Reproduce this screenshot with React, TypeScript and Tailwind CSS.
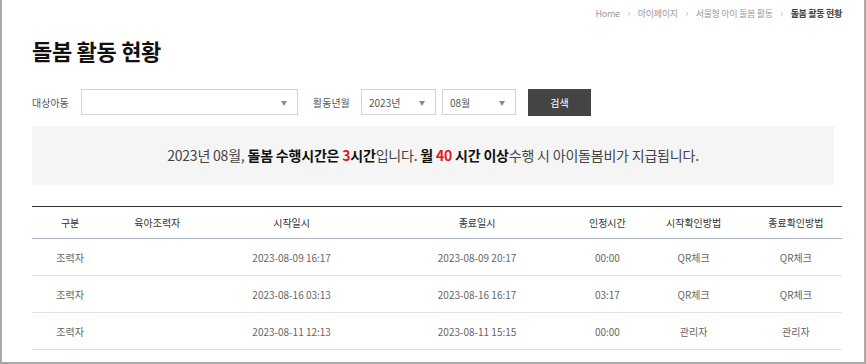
import { ChevronRight } from 'lucide-react'

const rows = [
  { type: '조력자', helper: '', start: '2023-08-09 16:17', end: '2023-08-09 20:17', time: '00:00', startCheck: 'QR체크', endCheck: 'QR체크' },
  { type: '조력자', helper: '', start: '2023-08-16 03:13', end: '2023-08-16 16:17', time: '03:17', startCheck: 'QR체크', endCheck: 'QR체크' },
  { type: '조력자', helper: '', start: '2023-08-11 12:13', end: '2023-08-11 15:15', time: '00:00', startCheck: '관리자', endCheck: '관리자' },
]

const cols = ['w-[76px]', 'w-[98px]', 'w-[170px]', 'w-[200px]', 'w-[60px]', 'w-[112px]', 'w-[92px]']
const heads = ['구분', '육아조력자', '시작일시', '종료일시', '인정시간', '시작확인방법', '종료확인방법']

function Select({ value, className }: { value?: string; className: string }) {
  return (
    <div className={`h-[26px] border border-[#d4d4d4] bg-white flex items-center justify-between pl-[7px] pr-[10px] ${className}`}>
      <span className="text-[10px] text-[#555]">{value}</span>
      <span className="text-[6px] text-[#888]">▼</span>
    </div>
  )
}

export default function App() {
  return (
    <div
      className="w-[866px] h-[364px] overflow-hidden bg-white border-l-2 border-r-2 border-b-2 border-[#a9a9a9]"
      style={{ fontFamily: '"Noto Sans CJK KR", "Noto Sans", sans-serif' }}
    >
      <div className="px-[30px]">
        {/* breadcrumb */}
        <div className="h-[26px] -mr-[8px] flex items-center justify-end gap-[5px] text-[9px] text-[#999] pt-[1px] tracking-[-0.3px]">
          <span>Home</span>
          <ChevronRight size={8} strokeWidth={1.5} />
          <span>마이페이지</span>
          <ChevronRight size={8} strokeWidth={1.5} />
          <span>서울형 아이 돌봄 활동</span>
          <ChevronRight size={8} strokeWidth={1.5} />
          <span className="font-bold text-[#444]">돌봄 활동 현황</span>
        </div>

        <h1 className="mt-[9px] text-[22px] leading-[30px] font-bold text-[#111] tracking-[-0.3px]">돌봄 활동 현황</h1>

        {/* filters */}
        <div className="mt-[24px] flex items-center h-[26px]">
          <span className="text-[10px] text-[#555] w-[49px]">대상아동</span>
          <Select className="w-[217px]" />
          <span className="ml-[15px] text-[10px] text-[#555] w-[48px]">활동년월</span>
          <Select value="2023년" className="w-[75px]" />
          <Select value="08월" className="ml-[6px] w-[74px]" />
          <button className="ml-[12px] w-[63px] h-[27px] bg-[#444] text-white text-[10px]">검색</button>
        </div>

        {/* notice */}
        <div className="mt-[11px] h-[59px] bg-[#f5f5f5] flex items-center justify-center text-[14px] text-[#444] tracking-[-0.2px]">
          <span>
            2023년 08월, <b className="text-[#111]">돌봄 수행시간은 </b>
            <b className="text-[#e8141b]">3</b>
            <b className="text-[#111]">시간</b>입니다. <b className="text-[#111]">월 </b>
            <b className="text-[#e8141b]">40</b>
            <b className="text-[#111]"> 시간 이상</b>수행 시 아이돌봄비가 지급됩니다.
          </span>
        </div>

        {/* table */}
        <table className="mt-[21px] w-[810px] border-collapse table-fixed text-[10px]">
          <thead>
            <tr className="h-[32px] border-t border-[#333] border-b border-b-[#aab6c3]">
              {heads.map((h, i) => (
                <th key={h} className={`${cols[i]} font-normal text-[#333] text-center`}>{h}</th>
              ))}
            </tr>
          </thead>
          <tbody>
            {rows.map((r, i) => (
              <tr key={i} className="h-[37px] border-b border-[#e2e2e2] text-[#666] text-center">
                <td>{r.type}</td>
                <td>{r.helper}</td>
                <td>{r.start}</td>
                <td>{r.end}</td>
                <td>{r.time}</td>
                <td>{r.startCheck}</td>
                <td>{r.endCheck}</td>
              </tr>
            ))}
          </tbody>
        </table>
      </div>
    </div>
  )
}
